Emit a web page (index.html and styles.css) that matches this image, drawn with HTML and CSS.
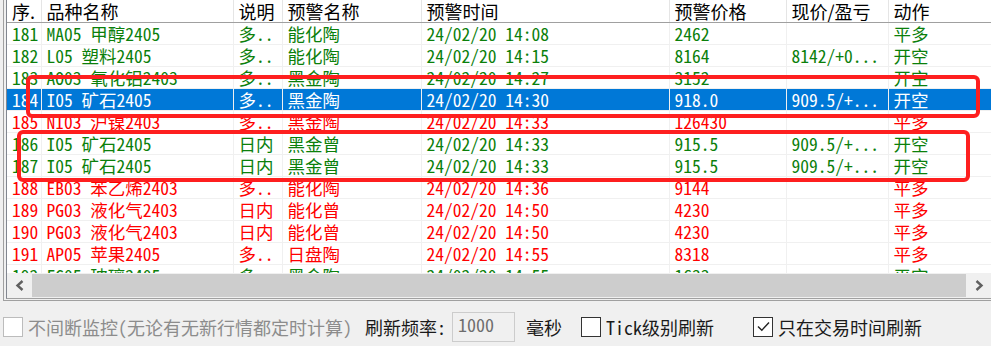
FILE: index.html
```html
<!DOCTYPE html>
<html lang="zh-CN">
<head>
    <meta charset="UTF-8">
    <title>预警监控</title>
    <link rel="stylesheet" href="styles.css">
</head>
<body>

    <div class="list-frame">
        <div class="list">
            <div class="table-view">
                <table class="grid">
                    <colgroup>
                        <col style="width:34px">
                        <col style="width:192px">
                        <col style="width:49px">
                        <col style="width:139px">
                        <col style="width:248px">
                        <col style="width:117px">
                        <col style="width:102px">
                        <col>
                    </colgroup>
                    <thead>
                        <tr>
                            <th>序.</th>
                            <th>品种名称</th>
                            <th>说明</th>
                            <th>预警名称</th>
                            <th>预警时间</th>
                            <th>预警价格</th>
                            <th>现价/盈亏</th>
                            <th>动作</th>
                        </tr>
                    </thead>
                    <tbody>
                        <tr class="up"><td>181</td><td>MA05 甲醇2405</td><td>多..</td><td>能化陶</td><td>24/02/20 14:08</td><td>2462</td><td></td><td>平多</td></tr>
                        <tr class="up"><td>182</td><td>L05 塑料2405</td><td>多..</td><td>能化陶</td><td>24/02/20 14:15</td><td>8164</td><td>8142/+0...</td><td>开空</td></tr>
                        <tr class="up"><td>183</td><td>AO03 氧化铝2403</td><td>多..</td><td>黑金陶</td><td>24/02/20 14:27</td><td>3152</td><td></td><td>开空</td></tr>
                        <tr class="sel"><td>184</td><td>I05 矿石2405</td><td>多..</td><td>黑金陶</td><td>24/02/20 14:30</td><td>918.0</td><td>909.5/+...</td><td>开空</td></tr>
                        <tr class="down"><td>185</td><td>NI03 沪镍2403</td><td>多..</td><td>黑金陶</td><td>24/02/20 14:33</td><td>126430</td><td></td><td>平多</td></tr>
                        <tr class="up"><td>186</td><td>I05 矿石2405</td><td>日内</td><td>黑金曾</td><td>24/02/20 14:33</td><td>915.5</td><td>909.5/+...</td><td>开空</td></tr>
                        <tr class="up"><td>187</td><td>I05 矿石2405</td><td>日内</td><td>黑金曾</td><td>24/02/20 14:33</td><td>915.5</td><td>909.5/+...</td><td>开空</td></tr>
                        <tr class="down"><td>188</td><td>EB03 苯乙烯2403</td><td>多..</td><td>能化陶</td><td>24/02/20 14:36</td><td>9144</td><td></td><td>平多</td></tr>
                        <tr class="down"><td>189</td><td>PG03 液化气2403</td><td>日内</td><td>能化曾</td><td>24/02/20 14:50</td><td>4230</td><td></td><td>平多</td></tr>
                        <tr class="down"><td>190</td><td>PG03 液化气2403</td><td>日内</td><td>能化曾</td><td>24/02/20 14:50</td><td>4230</td><td></td><td>平多</td></tr>
                        <tr class="down"><td>191</td><td>AP05 苹果2405</td><td>多..</td><td>日盘陶</td><td>24/02/20 14:55</td><td>8318</td><td></td><td>平多</td></tr>
                        <tr class="up"><td>192</td><td>FG05 玻璃2405</td><td>多..</td><td>黑金陶</td><td>24/02/20 14:55</td><td>1633</td><td></td><td>平空</td></tr>
                    </tbody>
                </table>
            </div>

            <!-- horizontal scrollbar -->
            <div class="hscroll">
                <div class="sb-btn">
                    <svg width="10" height="11" viewBox="0 0 10 11"><path d="M7.5 1 L2.5 5.5 L7.5 10" fill="none" stroke="#606060" stroke-width="2.4"/></svg>
                </div>
                <div class="sb-thumb"></div>
                <div class="sb-btn">
                    <svg width="10" height="11" viewBox="0 0 10 11"><path d="M2.5 1 L7.5 5.5 L2.5 10" fill="none" stroke="#606060" stroke-width="2.4"/></svg>
                </div>
            </div>
        </div>
    </div>

    <!-- options bar -->
    <div class="options">
        <span class="check disabled"></span>
        <span class="opt-label muted lbl-monitor">不间断监控(无论有无新行情都定时计算)</span>
        <span class="opt-label lbl-rate">刷新频率:</span>
        <span class="num-box">1000</span>
        <span class="opt-label lbl-ms">毫秒</span>
        <span class="check cb-tick"></span>
        <span class="opt-label lbl-after">Tick级别刷新</span>
        <span class="check checked cb-trade">
            <svg width="15" height="15" viewBox="0 0 15 15"><path d="M2 7.5 L5.8 11.3 L13 3.5" fill="none" stroke="#222" stroke-width="1.4"/></svg>
        </span>
        <span class="opt-label lbl-after">只在交易时间刷新</span>
    </div>

    <!-- red annotation marks -->
    <div class="mark mark-one"></div>
    <div class="mark mark-two"></div>

</body>
</html>
```

FILE: styles.css
```css
body {
    margin: 0;
    width: 991px;
    height: 346px;
    overflow: hidden;
    background-color: #f0f0f0;
    font-family: "Noto Sans Mono CJK SC", "Noto Sans CJK SC", monospace;
    position: relative;
}

.list-frame {
    margin-left: 3px;
    border-left: 1px solid #a0a0a0;
    border-bottom: 1px solid #a0a0a0;
    padding: 0 0 1px 2px;
}
.list {
    border-left: 1px solid #828790;
    border-bottom: 1px solid #a0a0a0;
    background-color: white;
}
.table-view { height: 273px; overflow: hidden; }

.grid {
    width: 984px;
    table-layout: fixed;
    border-collapse: collapse;
}
.grid th {
    height: 22px;
    padding: 0 0 0 5px;
    font-family: "Noto Sans CJK SC", sans-serif;
    font-size: 18px;
    font-weight: normal;
    line-height: 22px;
    text-align: left;
    color: #000;
    border-right: 1px solid #e5e5e5;
    border-bottom: 1px solid #a0a0a0;
    white-space: nowrap;
}
.grid td {
    height: 21px;
    padding: 0 0 0 5px;
    font-size: 17.5px;
    line-height: 21px;
    border-right: 1px solid #f0f0f0;
    border-bottom: 1px solid #f0f0f0;
    white-space: nowrap;
    overflow: hidden;
}
.grid th:last-child, .grid td:last-child { border-right: none; }
.up td { color: #0b800b; }
.down td { color: #ff0000; }
.sel td { background-color: #0078d7; color: white; }

.hscroll {
    display: flex;
    height: 25px;
    background-color: #f0f0f0;
}
.sb-btn {
    width: 25px;
    display: flex;
    align-items: center;
    justify-content: center;
}
.sb-thumb {
    flex: 1;
    margin: 1px 0;
    background-color: #cdcdcd;
}

.options {
    display: flex;
    align-items: center;
    height: 39px;
    padding: 6px 0 0 3px;
    font-size: 18px;
    color: #1a1a1a;
    white-space: nowrap;
}
.check {
    width: 18px;
    height: 18px;
    border: 1px solid #333;
    background-color: white;
    display: flex;
    align-items: center;
    justify-content: center;
}
.check.disabled { border-color: #bcbcbc; }
.opt-label { line-height: 20px; }
.muted { color: #8c8c8c; }
.lbl-monitor { margin-left: 5px; }
.lbl-rate { margin-left: 13px; }
.num-box {
    margin-left: 6px;
    width: 56px;
    height: 28px;
    padding: 0 0 0 5px;
    border: 1px solid #cccccc;
    background-color: #f0f0f0;
    color: #6d6d6d;
    line-height: 22px;
}
.lbl-ms { margin-left: 11px; }
.cb-tick { margin-left: 19px; }
.lbl-after { margin-left: 5px; }
.cb-trade { margin-left: 39px; }

/* annotation boxes drawn over the screenshot */
.mark {
    position: absolute;
    border: 4px solid #fe1f1f;
    border-radius: 6px;
    box-sizing: border-box;
}
.mark-one { left: 26px; top: 75px; width: 954px; height: 43px; }
.mark-two { left: 17px; top: 130px; width: 953px; height: 52px; }
```
